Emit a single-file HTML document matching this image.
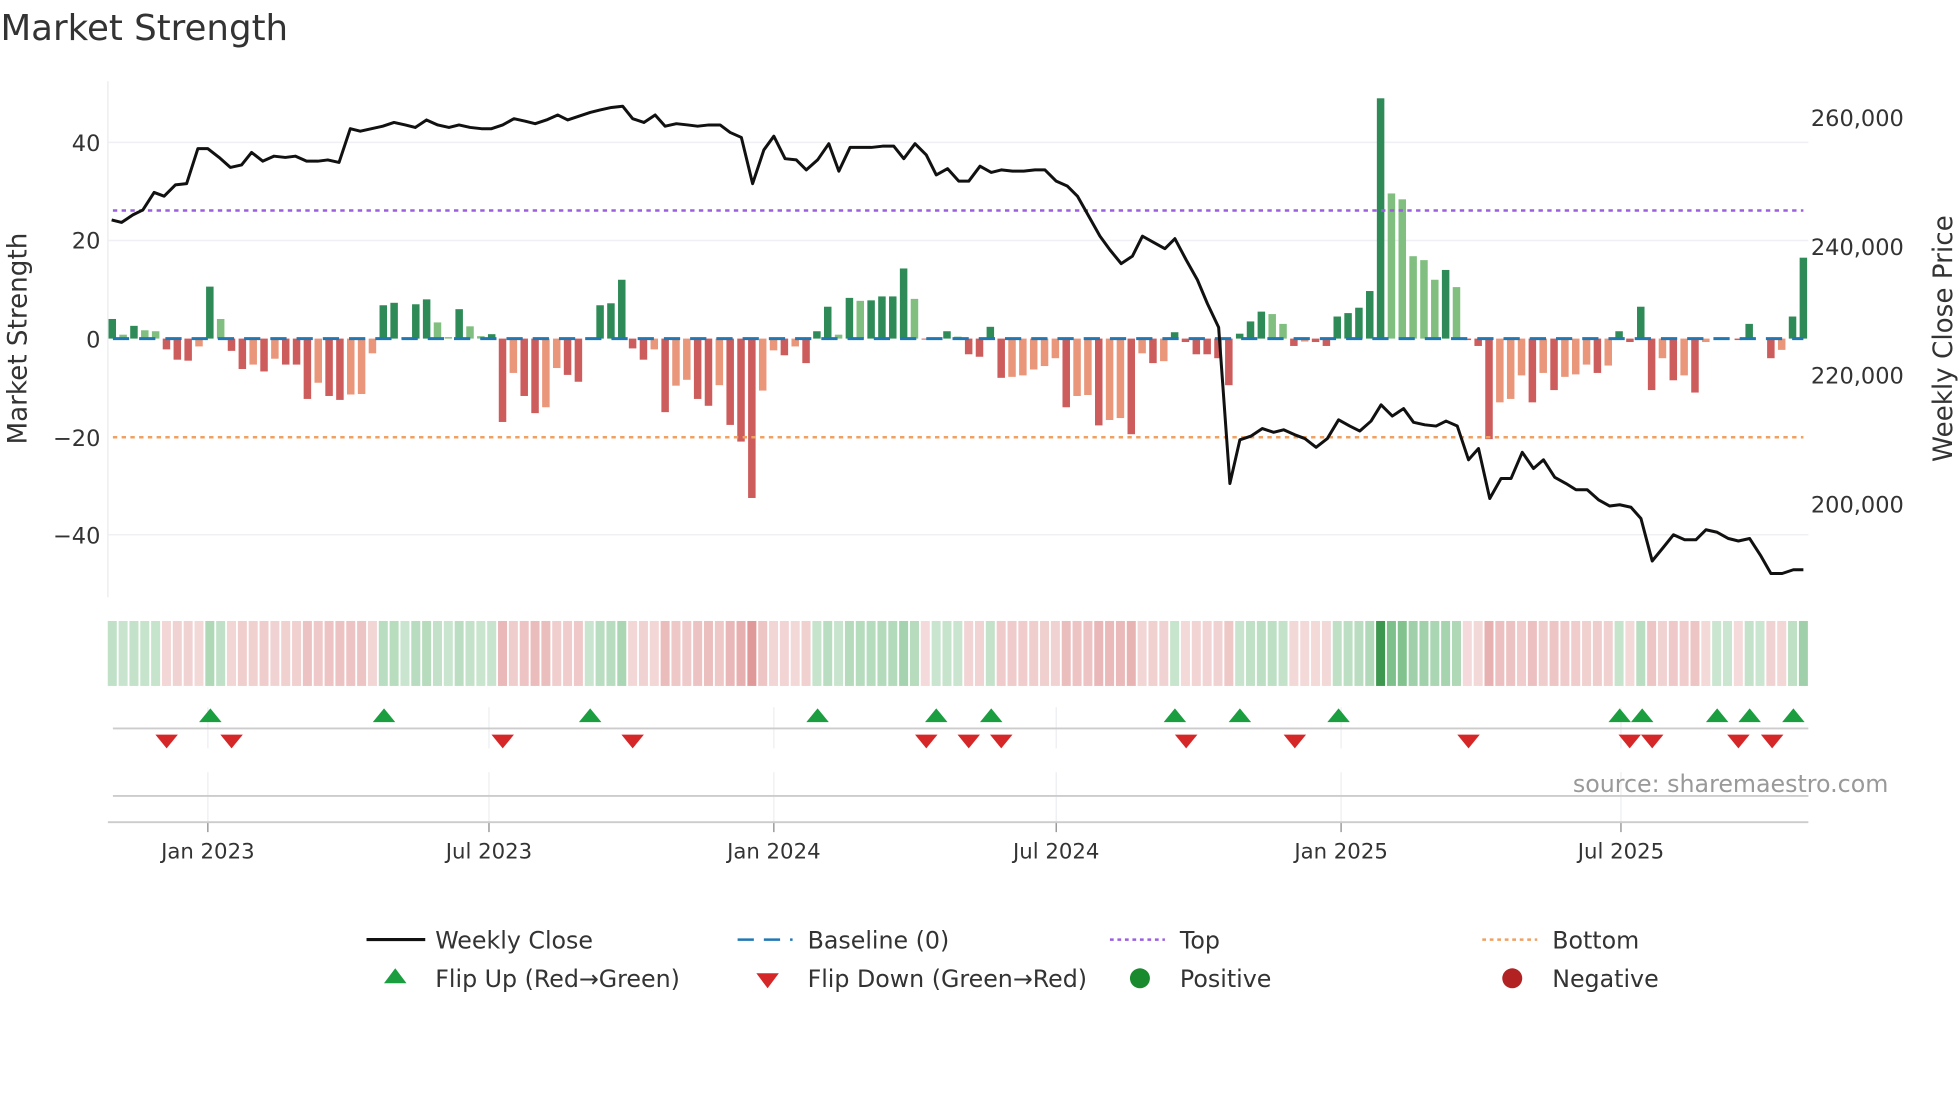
<!DOCTYPE html>
<html><head><meta charset="utf-8">
<style>
html,body{margin:0;padding:0;background:#fff;}
svg{display:block;font-family:"DejaVu Sans","Liberation Sans",sans-serif;}
</style></head>
<body>
<svg id="s" width="1960" height="1102" viewBox="0 0 1568 882" xmlns="http://www.w3.org/2000/svg">
<rect width="1568" height="882" fill="#fff"/>
<text x="0" y="32" font-size="28.5" fill="#333">Market Strength</text>
<g id="grid"></g>
<g id="bars"></g>
<g id="heat"></g>
<g id="lines"></g>
<g id="marks"></g>
<g id="axes" fill="#333" font-size="18">
<text x="80" y="121" text-anchor="end">40</text>
<text x="80" y="199" text-anchor="end">20</text>
<text x="80" y="278" text-anchor="end">0</text>
<text x="80" y="357" text-anchor="end">−20</text>
<text x="80" y="435" text-anchor="end">−40</text>
<text x="1449" y="101">260,000</text>
<text x="1449" y="204">240,000</text>
<text x="1449" y="307">220,000</text>
<text x="1449" y="410">200,000</text>
<text transform="translate(21,271) rotate(-90)" text-anchor="middle" font-size="21">Market Strength</text>
<text transform="translate(1562,271) rotate(-90)" text-anchor="middle" font-size="21">Weekly Close Price</text>
<g font-size="17" text-anchor="middle">
<text x="166" y="687">Jan 2023</text>
<text x="391" y="687">Jul 2023</text>
<text x="619" y="687">Jan 2024</text>
<text x="845" y="687">Jul 2024</text>
<text x="1073" y="687">Jan 2025</text>
<text x="1297" y="687">Jul 2025</text>
</g>
<text x="1511" y="634" text-anchor="end" fill="#999" font-size="19">source: sharemaestro.com</text>
</g>
<g id="legend" font-size="19" fill="#333">
<line x1="293" y1="752" x2="340" y2="752" stroke="#111" stroke-width="2.5"/>
<text x="348" y="759">Weekly Close</text>
<line x1="590" y1="752" x2="634" y2="752" stroke="#1f77b4" stroke-width="2" stroke-dasharray="13,8"/>
<text x="646" y="759">Baseline (0)</text>
<line x1="888" y1="752" x2="932" y2="752" stroke="#9b5ee0" stroke-width="2" stroke-dasharray="3,3"/>
<text x="944" y="759">Top</text>
<line x1="1186" y1="752" x2="1230" y2="752" stroke="#f0a060" stroke-width="2" stroke-dasharray="3,3"/>
<text x="1242" y="759">Bottom</text>
<polygon points="307,787 325,787 316,775" fill="#1a9e40"/>
<text x="348" y="790">Flip Up (Red→Green)</text>
<polygon points="605,779 623,779 614,791" fill="#d62728"/>
<text x="646" y="790">Flip Down (Green→Red)</text>
<circle cx="912" cy="783" r="8" fill="#1a8a2e"/>
<text x="944" y="790">Positive</text>
<circle cx="1210" cy="783" r="8" fill="#b22222"/>
<text x="1242" y="790">Negative</text>
</g>
</svg>
<script>
var NS="http://www.w3.org/2000/svg";
function el(p,t,a){var e=document.createElementNS(NS,t);for(var k in a)e.setAttribute(k,a[k]);document.getElementById(p).appendChild(e);return e;}
[114,192.5,428].forEach(function(y){el("grid","line",{x1:86,x2:1447,y1:y,y2:y,stroke:"#eef0f3","stroke-width":1.2});});
el("grid","line",{x1:86,x2:86,y1:65,y2:478,stroke:"#eceef1","stroke-width":1.2});
[166,391,619,845,1073,1297].forEach(function(x){
 el("grid","line",{x1:x,x2:x,y1:566,y2:599,stroke:"#eceef1","stroke-width":1});
 el("grid","line",{x1:x,x2:x,y1:618,y2:658,stroke:"#eceef1","stroke-width":1});
 el("grid","line",{x1:x,x2:x,y1:658,y2:666,stroke:"#888","stroke-width":1});
});
el("grid","line",{x1:90,x2:1447,y1:583,y2:583,stroke:"#ccc","stroke-width":1.5});
el("grid","line",{x1:90,x2:1447,y1:637,y2:637,stroke:"#ccc","stroke-width":1.5});
el("grid","line",{x1:86,x2:1447,y1:658,y2:658,stroke:"#ccc","stroke-width":1.5});
var B=[[4,'D'],[0.8,'L'],[2.6,'D'],[1.7,'L'],[1.5,'L'],[-2.2,'R'],[-4.3,'R'],[-4.5,'R'],[-1.6,'S'],[10.6,'D'],[4,'L'],[-2.5,'R'],[-6.2,'R'],[-5.3,'S'],[-6.7,'R'],[-4.1,'S'],[-5.3,'R'],[-5.3,'R'],[-12.3,'R'],[-9,'S'],[-11.7,'R'],[-12.5,'R'],[-11.4,'S'],[-11.3,'S'],[-3,'S'],[6.8,'D'],[7.3,'D'],[0.2,'L'],[7,'D'],[8,'D'],[3.3,'L'],[0.3,'L'],[6,'D'],[2.5,'L'],[0.5,'L'],[0.9,'D'],[-17,'R'],[-7,'S'],[-11.7,'R'],[-15.2,'R'],[-14,'S'],[-6,'S'],[-7.4,'R'],[-8.8,'R'],[0.2,'L'],[6.8,'D'],[7.2,'D'],[12,'D'],[-2,'R'],[-4.3,'R'],[-2.2,'S'],[-15,'R'],[-9.6,'S'],[-8.4,'S'],[-12.3,'R'],[-13.7,'R'],[-9.5,'S'],[-17.6,'R'],[-21,'R'],[-32.5,'R'],[-10.6,'S'],[-2.4,'S'],[-3.4,'R'],[-1.6,'S'],[-5,'R'],[1.5,'D'],[6.5,'D'],[0.8,'L'],[8.3,'D'],[7.7,'L'],[7.8,'D'],[8.6,'D'],[8.6,'D'],[14.3,'D'],[8.1,'L'],[-0.2,'R'],[0.2,'L'],[1.5,'D'],[0.4,'L'],[-3.2,'R'],[-3.7,'R'],[2.4,'D'],[-8,'R'],[-7.8,'S'],[-7.5,'S'],[-6.3,'S'],[-5.6,'S'],[-4,'S'],[-14,'R'],[-11.7,'S'],[-11.5,'S'],[-17.7,'R'],[-16.6,'S'],[-16.2,'S'],[-19.5,'R'],[-3,'S'],[-5,'R'],[-4.6,'S'],[1.3,'D'],[-0.7,'R'],[-3.2,'R'],[-3.2,'R'],[-4,'R'],[-9.5,'R'],[1,'D'],[3.5,'D'],[5.5,'D'],[5,'L'],[3,'L'],[-1.5,'R'],[-0.6,'S'],[-0.7,'R'],[-1.5,'R'],[4.5,'D'],[5.2,'D'],[6.3,'D'],[9.7,'D'],[49,'D'],[29.6,'L'],[28.4,'L'],[16.8,'L'],[16,'L'],[12,'L'],[14,'D'],[10.5,'L'],[-0.3,'R'],[-1.5,'R'],[-20.5,'R'],[-13,'S'],[-12.3,'S'],[-7.5,'S'],[-13,'R'],[-7,'S'],[-10.5,'R'],[-7.8,'S'],[-7.3,'S'],[-5.3,'S'],[-7,'R'],[-5.5,'S'],[1.5,'D'],[-0.7,'R'],[6.5,'D'],[-10.5,'R'],[-4,'S'],[-8.5,'R'],[-7.5,'S'],[-11,'R'],[-0.7,'S'],[0,'L'],[0,'L'],[-0.3,'R'],[3,'D'],[0,'L'],[-4,'R'],[-2.3,'S'],[4.5,'D'],[16.5,'D']];
var n=B.length,x0=89.5,x1=1443,st=(x1-x0)/(n-1),U=3.925,Y0=271;
var C={D:"#2e8b57",L:"#80bf80",R:"#cd5c5c",S:"#e9967a"};
B.forEach(function(b,i){
 var x=x0+i*st,v=b[0],h=Math.abs(v)*U;
 if(h>0.3) el("bars","rect",{x:x-3,y:v>0?Y0-h:Y0,width:6,height:h,fill:C[b[1]]});
 var pos=v>0.25?true:(v<-0.25?false:(b[1]=='D'||b[1]=='L'));
 var a=Math.min(1,Math.abs(v)/45);
 var col=pos?"rgba(60,160,80,"+(0.27+0.6*a)+")":"rgba(205,90,90,"+(0.22+0.55*a)+")";
 if(pos&&v>40) col="rgba(40,140,60,0.9)";
 el("heat","rect",{x:x-3.6,y:497,width:7.2,height:52,fill:col});
});
el("lines","line",{x1:90,x2:1443,y1:271,y2:271,stroke:"#1f77b4","stroke-width":2.4,"stroke-dasharray":"13,8"});
el("lines","line",{x1:90,x2:1443,y1:168.5,y2:168.5,stroke:"#9b5ee0","stroke-width":2,"stroke-dasharray":"3.5,3.5"});
el("lines","line",{x1:90,x2:1443,y1:350,y2:350,stroke:"#f0a060","stroke-width":2,"stroke-dasharray":"3.5,3.5"});
var P=[[89,176],[97,178],[106,172],[114,168],[123,154],[131,157],[140,148],[149,147],[158,119],[166,119],[175,126],[184,134],[193,132],[201,122],[210,129],[219,125],[228,126],[236,125],[245,129],[254,129],[262,128],[271,130],[280,103],[288,105],[297,103],[306,101],[315,98],[324,100],[332,102],[341,96],[350,100],[359,102],[367,100],[376,102],[385,103],[393,103],[402,100],[411,95],[420,97],[428,99],[437,96],[446,92],[454,96],[463,93],[472,90],[480,88],[489,86],[498,85],[506,95],[515,98],[524,92],[532,101],[541,99],[550,100],[558,101],[567,100],[576,100],[584,106],[593,110],[602,147],[611,120],[619,109],[628,127],[637,128],[645,136],[654,128],[663,115],[671,137],[680,118],[689,118],[697,118],[706,117],[715,117],[723,127],[732,115],[741,124],[749,140],[758,135],[767,145],[775,145],[784,133],[793,138],[801,136],[810,137],[819,137],[828,136],[836,136],[845,145],[854,149],[862,157],[871,173],[880,189],[888,200],[897,211],[906,205],[914,189],[923,194],[932,199],[940,191],[949,208],[958,224],[966,243],[975,262],[984,387],[992,352],[1001,349],[1010,343],[1019,346],[1027,344],[1036,348],[1044,351],[1053,358],[1062,351],[1071,336],[1080,341],[1088,345],[1097,337],[1105,324],[1114,333],[1123,327],[1131,338],[1140,340],[1149,341],[1157,337],[1166,341],[1175,368],[1183,359],[1192,399],[1201,383],[1209,383],[1218,362],[1227,375],[1235,368],[1244,382],[1253,387],[1261,392],[1270,392],[1279,400],[1288,405],[1296,404],[1305,406],[1313,415],[1322,449],[1331,438],[1339,428],[1348,432],[1357,432],[1365,424],[1374,426],[1383,431],[1391,433],[1400,431],[1409,445],[1417,459],[1426,459],[1435,456],[1443,456]];
el("lines","polyline",{points:P.map(function(p){return p.join(",")}).join(" "),fill:"none",stroke:"#111","stroke-width":2.4,"stroke-linejoin":"round"});
[168,307,472,654,749,793,940,992,1071,1296,1314,1374,1400,1435].forEach(function(x){
 el("marks","polygon",{points:(x-9)+",578 "+(x+9)+",578 "+x+",567",fill:"#1a9e40"});});
[133,185,402,506,741,775,801,949,1036,1175,1304,1322,1391,1418].forEach(function(x){
 el("marks","polygon",{points:(x-9)+",588 "+(x+9)+",588 "+x+",599",fill:"#d62728"});});
</script>
</body></html>
